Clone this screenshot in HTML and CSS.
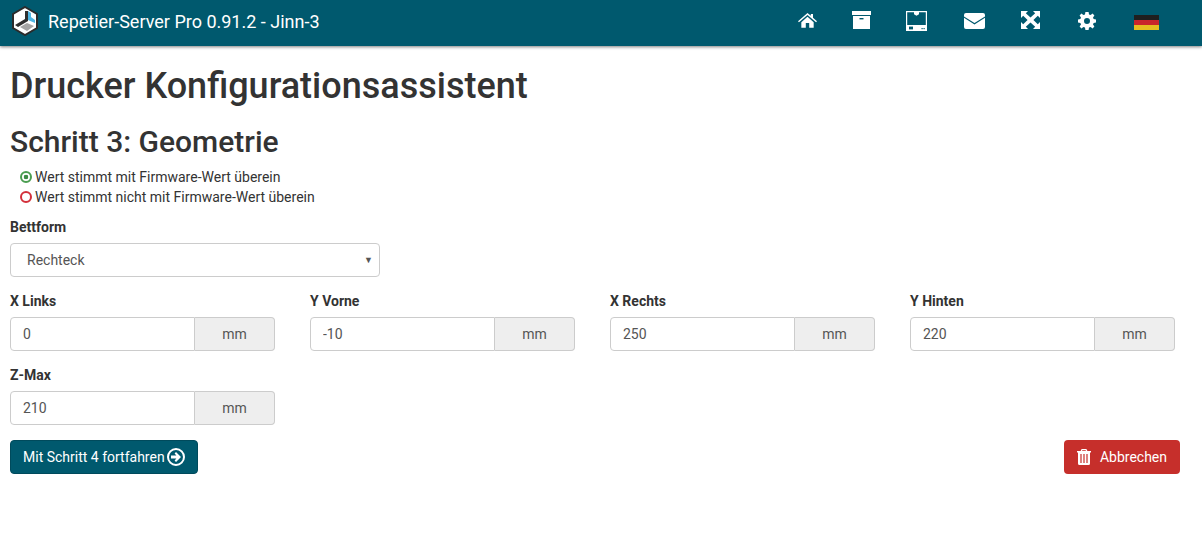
FILE: index.html
```html
<!DOCTYPE html>
<html lang="de">
<head>
    <meta charset="UTF-8">
    <title>Repetier-Server Pro</title>
    <link rel="stylesheet" href="styles.css">
</head>
<body>
    <nav class="navbar">
        <a class="brand">
            <svg class="logo" viewBox="0 0 26 30" width="26" height="30">
                <polygon points="13,1 25,8 25,22 13,29 1,22 1,8" fill="#fff" stroke="#2b2b2b" stroke-width="2"/>
                <polygon points="13,5 16,5 16,15 6,21 3,19 13,13" fill="#2f2f2f"/>
                <polygon points="16,5 19,7 19,11 23,14 23,17 16,14" fill="#4fb6e3"/>
                <polygon points="15,17 22,20 15,25 8,21" fill="#a5a5a5"/>
            </svg>
            <span>Repetier-Server Pro 0.91.2 - Jinn-3</span>
        </a>
        <div class="nav-icons">
            <svg class="nav-icon" viewBox="0 -1.5 20 21" width="19" height="20"><path d="M10 0.5 L13.5 3.6 V1.5 H15.8 V5.6 L20 9.2 L19 10.4 L10 2.6 L1 10.4 L0 9.2 Z M3.5 10.4 L10 4.6 L16.5 10.4 V16 H11.8 V11 H8.2 V16 H3.5 Z" fill="#fff"/></svg>
            <svg class="nav-icon" viewBox="0 0 19 20" width="19" height="20"><path d="M0 0 H19 V4 H0 Z M1 5 H18 V18 H1 Z" fill="#fff"/><rect x="7.5" y="7" width="4" height="1.4" fill="#00596e"/></svg>
            <svg class="nav-icon" viewBox="0 0 21 20" width="21" height="20"><path fill-rule="evenodd" d="M0 0 H21 V20 H0 Z M1.2 1.2 V14 H19.8 V1.2 H13 V3.2 L10.5 4.8 L8 3.2 V1.2 Z" fill="#fff"/><rect x="3" y="15.6" width="4" height="2.8" fill="#00596e"/><rect x="15.5" y="17" width="1.2" height="1.2" fill="#00596e"/><rect x="17.5" y="17" width="1.2" height="1.2" fill="#00596e"/></svg>
            <svg class="nav-icon" viewBox="0 -2 21 20" width="21" height="20"><path d="M2 0 H19 A2 2 0 0 1 21 2 V3.4 L10.5 10 L0 3.4 V2 A2 2 0 0 1 2 0 Z M0 4.8 L10.5 11.4 L21 4.8 V14 A2 2 0 0 1 19 16 H2 A2 2 0 0 1 0 14 Z" fill="#fff"/></svg>
            <svg class="nav-icon" viewBox="0 0 19 20" width="19" height="20"><path d="M0 0 H7 L4.8 2.2 L9.5 6.4 L14.2 2.2 L12 0 H19 V7 L16.8 4.8 L12.4 9 L16.8 13.2 L19 11 V18 H12 L14.2 15.8 L9.5 11.6 L4.8 15.8 L7 18 H0 V11 L2.2 13.2 L6.6 9 L2.2 4.8 L0 7 Z" fill="#fff"/></svg>
            <svg class="nav-icon" viewBox="0 -1 18 20" width="18" height="20"><path fill-rule="evenodd" d="M7.4 0 H10.6 L11 2.4 L12.6 3 L14.6 1.6 L16.4 3.4 L15 5.4 L15.6 7 L18 7.4 V10.6 L15.6 11 L15 12.6 L16.4 14.6 L14.6 16.4 L12.6 15 L11 15.6 L10.6 18 H7.4 L7 15.6 L5.4 15 L3.4 16.4 L1.6 14.6 L3 12.6 L2.4 11 L0 10.6 V7.4 L2.4 7 L3 5.4 L1.6 3.4 L3.4 1.6 L5.4 3 L7 2.4 Z M9 6 A3 3 0 1 0 9 12 A3 3 0 1 0 9 6 Z" fill="#fff"/></svg>
            <svg class="nav-icon" viewBox="0 -4 25 20" width="25" height="20"><rect width="25" height="5" fill="#1f1f1f"/><rect y="5" width="25" height="5" fill="#c9252b"/><rect y="10" width="25" height="5" fill="#e5bd20"/></svg>
        </div>
    </nav>

    <main class="content">
        <h1>Drucker Konfigurationsassistent</h1>
        <h2>Schritt 3: Geometrie</h2>

        <ul class="legend">
            <li><span class="dot dot-ok"></span>Wert stimmt mit Firmware-Wert überein</li>
            <li><span class="dot dot-bad"></span>Wert stimmt nicht mit Firmware-Wert überein</li>
        </ul>

        <div class="field field-select">
            <label>Bettform</label>
            <div class="select">
                <span>Rechteck</span>
                <span class="caret">▼</span>
            </div>
        </div>

        <div class="field-grid">
            <div class="field">
                <label>X Links</label>
                <div class="input-group"><input type="text" value="0"><span class="addon">mm</span></div>
            </div>
            <div class="field">
                <label>Y Vorne</label>
                <div class="input-group"><input type="text" value="-10"><span class="addon">mm</span></div>
            </div>
            <div class="field">
                <label>X Rechts</label>
                <div class="input-group"><input type="text" value="250"><span class="addon">mm</span></div>
            </div>
            <div class="field">
                <label>Y Hinten</label>
                <div class="input-group"><input type="text" value="220"><span class="addon">mm</span></div>
            </div>
            <div class="field">
                <label>Z-Max</label>
                <div class="input-group"><input type="text" value="210"><span class="addon">mm</span></div>
            </div>
        </div>

        <div class="actions">
            <button class="btn btn-primary">Mit Schritt 4 fortfahren
                <svg viewBox="0 0 18 18" width="18" height="18"><path fill-rule="evenodd" d="M9 0 A9 9 0 1 1 9 18 A9 9 0 1 1 9 0 Z M9 2 A7 7 0 1 0 9 16 A7 7 0 1 0 9 2 Z" fill="#fff"/><path d="M9 4 L7.6 5.4 L9.4 7.6 H4 V10.4 H9.4 L7.6 12.6 L9 14 L14 9 Z" fill="#fff"/></svg>
            </button>
            <button class="btn btn-danger">
                <svg viewBox="0 0 14 16" width="14" height="16"><path fill-rule="evenodd" d="M4.6 0 H9.4 L10.4 2 H14 V3.6 H13 V14.5 A1.5 1.5 0 0 1 11.5 16 H2.5 A1.5 1.5 0 0 1 1 14.5 V3.6 H0 V2 H3.6 Z M5.4 1.2 L5 2 H9 L8.6 1.2 Z M3.4 5 V14 H4.6 V5 Z M6.4 5 V14 H7.6 V5 Z M9.4 5 V14 H10.6 V5 Z" fill="#fff"/></svg>
                Abbrechen
            </button>
        </div>
    </main>
</body>
</html>
```

FILE: styles.css
```css
* {
    box-sizing: border-box;
}

body {
    margin: 0;
    background: #fff;
    color: #333;
    font-family: Roboto, "Liberation Sans", sans-serif;
    font-size: 14px;
}

.navbar {
    display: flex;
    justify-content: space-between;
    align-items: center;
    height: 46px;
    padding: 0 43px 4px 12px;
    background: #00596e;
    box-shadow: 0 1px 3px rgba(0, 0, 0, 0.5);
}

.brand {
    display: flex;
    align-items: center;
    gap: 10px;
    color: #fff;
    font-size: 18px;
}

.nav-icons {
    display: grid;
    grid-template-columns: 54px 54px 58px 57px 57px 56px 25px;
    align-items: center;
}

.nav-icon {
    display: block;
}

.content {
    padding: 0 10px;
}

h1 {
    margin: 20px 0 0;
    font-size: 36px;
    font-weight: 500;
    line-height: 40px;
}

h2 {
    margin: 18px 0 0;
    font-size: 30px;
    font-weight: 500;
    line-height: 36px;
}

.legend {
    list-style: none;
    margin: 7px 0 0;
    padding: 0 0 0 10px;
    font-size: 14px;
    line-height: 20px;
}

.legend li {
    display: flex;
    align-items: center;
}

.dot {
    width: 12px;
    height: 12px;
    margin-right: 3px;
    border-radius: 50%;
    border: 2px solid #d32f3a;
}

.dot-ok {
    border-color: #4a9d50;
    background: radial-gradient(circle, #3d8b45 0 2px, #fff 2.6px);
}

.field label {
    display: block;
    margin-bottom: 6px;
    font-weight: 700;
    font-size: 14px;
    line-height: 20px;
}

.field-select {
    width: 370px;
    margin-top: 10px;
}

.select {
    display: flex;
    justify-content: space-between;
    align-items: center;
    height: 34px;
    padding: 0 6px 0 16px;
    border: 1px solid #ccc;
    border-radius: 4px;
    color: #555;
}

.caret {
    font-size: 9px;
    color: #555;
}

.field-grid {
    display: grid;
    grid-template-columns: repeat(4, 265px);
    column-gap: 35px;
    row-gap: 14px;
    margin-top: 14px;
}

.input-group {
    display: flex;
    height: 34px;
}

.input-group input {
    width: 185px;
    padding: 0 12px;
    border: 1px solid #ccc;
    border-radius: 4px 0 0 4px;
    color: #555;
    font: inherit;
}

.addon {
    display: flex;
    justify-content: center;
    align-items: center;
    flex: 1;
    border: 1px solid #ccc;
    border-left: 0;
    border-radius: 0 4px 4px 0;
    background: #eee;
    color: #555;
}

.actions {
    display: flex;
    justify-content: space-between;
    margin: 15px 12px 0 0;
}

.btn {
    display: flex;
    align-items: center;
    height: 34px;
    padding: 0 12px;
    border: 1px solid transparent;
    border-radius: 4px;
    color: #fff;
    font: 400 14px Roboto, "Liberation Sans", sans-serif;
}

.btn-primary {
    gap: 2px;
    background: #00596e;
    border-color: #004a5c;
}

.btn-danger {
    gap: 9px;
    background: #c62f2b;
}
```
